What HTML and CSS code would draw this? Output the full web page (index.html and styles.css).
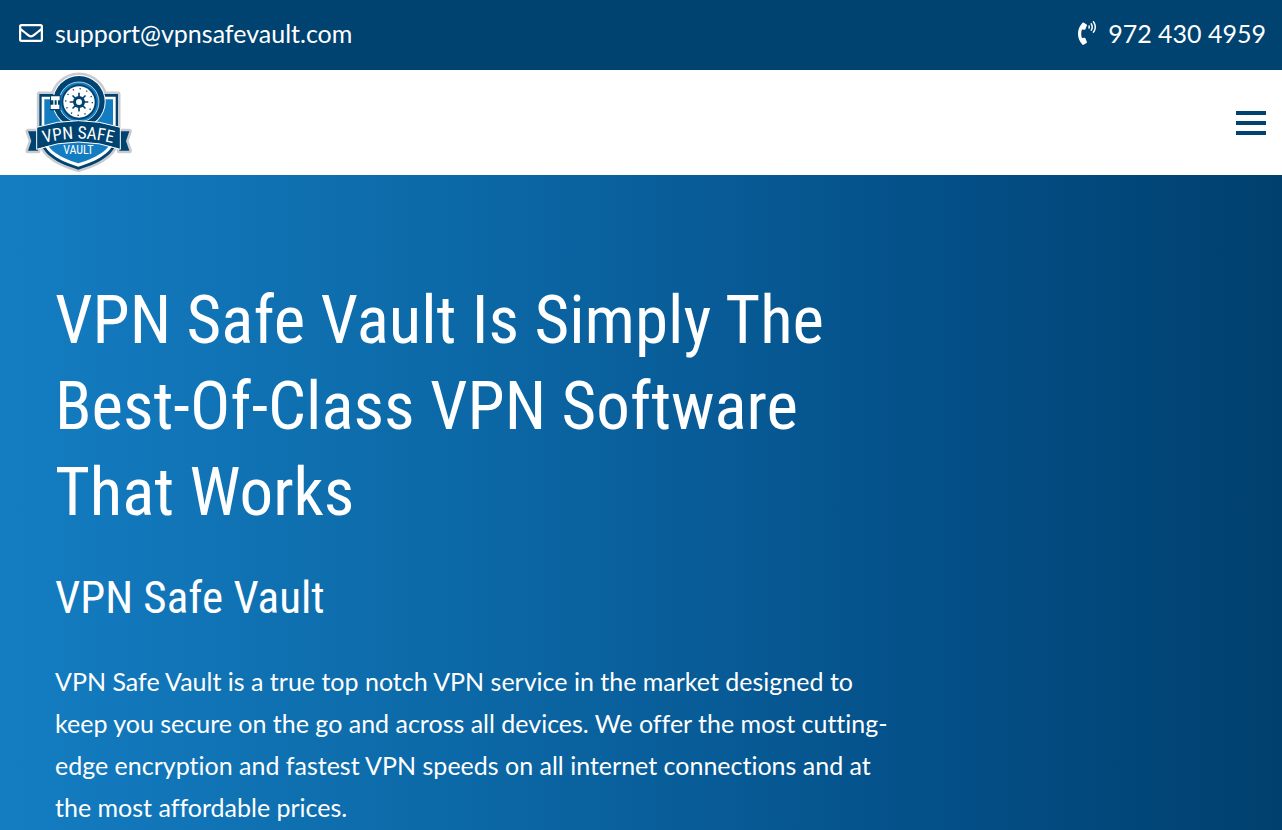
FILE: index.html
```html
<!DOCTYPE html>
<html lang="en">
<head>
<meta charset="utf-8">
<meta name="viewport" content="width=device-width, initial-scale=1">
<title>VPN Safe Vault</title>
<link rel="stylesheet" href="styles.css">
</head>
<body>
<div class="topbar">
  <a class="contact" href="mailto:support@vpnsafevault.com">
    <svg class="icon-mail" viewBox="0 0 512 512" aria-hidden="true"><path d="M464 64H48C21.500 64 0 85.500 0 112v288c0 26.500 21.500 48 48 48h416c26.500 0 48-21.500 48-48V112c0-26.500-21.500-48-48-48zm0 48v40.800c-22.400 18.300-58.200 46.700-134.600 106.500-16.800 13.200-50.200 45.100-73.400 44.700-23.200.4-56.600-31.500-73.400-44.700C106.200 199.500 70.400 171.100 48 152.800V112h416zM48 400V214.400c22.900 18.300 55.400 43.900 104.900 82.600 21.900 17.200 60.100 55.200 103.100 55 42.700.2 80.500-37.200 103.100-54.900 49.500-38.800 82-64.400 104.900-82.700V400H48z"/></svg>
    <span>support@vpnsafevault.com</span>
  </a>
  <a class="contact" href="tel:9724304959">
    <svg class="icon-phone" viewBox="0 0 384 512" aria-hidden="true"><path d="M97.300 506.900c-129.900-129.900-129.700-340.300 0-469.900 5.700-5.700 14.500-6.600 21.300-2.400l64.800 40.500a17.200 17.200 0 0 1 6.800 21l-32.400 81a17.200 17.200 0 0 1-17.700 10.700l-55.800-5.600c-21.100 58.300-20.600 122.500 0 179.500l55.800-5.600a17.200 17.200 0 0 1 17.700 10.700l32.400 81a17.200 17.200 0 0 1-6.800 21l-64.800 40.500a17.200 17.200 0 0 1-21.300-2.400zM247.100 95.500c11.800 20 11.800 45 0 65.100-4 6.700-13.100 8-18.700 2.600l-6-5.700c-3.900-3.700-4.800-9.600-2.300-14.400a32.100 32.100 0 0 0 0-29.900c-2.500-4.800-1.700-10.700 2.300-14.400l6-5.700c5.600-5.400 14.800-4.100 18.700 2.400zm91.800-91.200c60.100 71.600 60.100 175.900 0 247.400-4.500 5.300-12.500 5.700-17.600.9l-5.800-5.600c-4.600-4.400-5-11.500-.9-16.400 49.700-59.500 49.600-145.900 0-205.400-4-4.900-3.700-12 .9-16.400l5.800-5.600c5-4.800 13.100-4.400 17.600 1.100zm-46 44.900c36.100 46.300 36.100 111.100 0 157.500-4.400 5.600-12.700 6.300-17.900 1.300l-5.800-5.600c-4.400-4.200-5-11.100-1.300-15.900 26.500-34.600 26.500-82.600 0-117.100-3.700-4.800-3.100-11.700 1.300-15.900l5.800-5.600c5.200-4.900 13.500-4.200 17.900 1.300z"/></svg>
    <span>972 430 4959</span>
  </a>
</div>
<header class="header">
  <a class="brand" href="#" aria-label="VPN Safe Vault home">
    <svg class="logo" viewBox="45 12 321 315" aria-hidden="true">
      <defs>
        <path id="arch" d="M84 236Q205 200 326 236"/>
      </defs>
      <g class="logo-halo">
        <path d="M88 84H324V208C322 256 284 288 205 311C126 288 90 256 88 208Z"/>
        <circle cx="207" cy="107" r="80"/>
        <path d="M54 196H84V254H54L64 225ZM358 196H328V254H358L348 225Z"/>
      </g>
      <path class="navy" d="M88 84H324V208C322 256 284 288 205 311C126 288 90 256 88 208Z"/>
      <path class="white" d="M95 92H317V207C315 250 278 280 205 302C132 280 97 250 95 207Z"/>
      <path class="blue" d="M103 100H309V206C307 244 272 271 205 292C138 271 105 244 103 206Z"/>
      <circle class="white" cx="207" cy="107" r="80"/>
      <circle class="navy" cx="207" cy="107" r="77"/>
      <circle class="ring-blue" cx="207" cy="108" r="60"/>
      <circle class="ring-navy" cx="207" cy="108" r="53"/>
      <circle class="white" cx="207" cy="108" r="47"/>
      <circle class="dots" cx="207" cy="108" r="40"/>
      <path class="spokes" d="M207 82V134M181 108H233M189 90L225 126M189 126L225 90"/>
      <circle class="navy" cx="207" cy="108" r="18"/>
      <circle class="white" cx="207" cy="108" r="9"/>
      <path class="navy" d="M120 87H152V133H120Z"/>
      <path class="white" d="M123 91H149V103H123ZM122 116H148V129H122ZM130 103H134V116H130ZM140 103H144V116H140Z"/>
      <path class="navy" d="M54 196H84V254H54L64 225ZM358 196H328V254H358L348 225Z"/>
      <path class="ribbon" d="M80 184Q205 144 331 184V250Q205 206 80 250Z"/>
      <text class="logo-name"><textPath href="#arch" startOffset="50%">VPN SAFE</textPath></text>
      <text class="logo-sub" x="205" y="263">VAULT</text>
    </svg>
  </a>
  <button class="menu" type="button" aria-label="Open menu"><span></span><span></span><span></span></button>
</header>
<main class="hero">
  <h1>VPN Safe Vault Is Simply The<br>Best-Of-Class VPN Software<br>That Works</h1>
  <h2>VPN Safe Vault</h2>
  <p>VPN Safe Vault is a true top notch VPN service in the market designed to<br>keep you secure on the go and across all devices. We offer the most cutting-<br>edge encryption and fastest VPN speeds on all internet connections and at<br>the most affordable prices.</p>
</main>
</body>
</html>
```

FILE: styles.css
```css
* { box-sizing: border-box; }
body {
  margin: 0;
  font-family: Lato, "Open Sans", sans-serif;
  font-size: 25px;
  font-variant-ligatures: none;
  color: #fff;
}
.topbar {
  display: flex;
  justify-content: space-between;
  align-items: center;
  min-height: 70px;
  padding: 0 16px 4px 19px;
  background: #004270;
}
.contact {
  display: flex;
  align-items: center;
  gap: 12px;
  color: #fff;
  text-decoration: none;
}
.contact svg { height: 24px; fill: #fff; }
.icon-mail { width: 24px; }
.icon-phone { width: 18px; }
.header {
  display: flex;
  justify-content: space-between;
  align-items: center;
  padding: 0 16px 0 25px;
  background: #fff;
}
.brand, .logo { display: block; }
.logo { width: 107px; height: 105px; }
.menu {
  display: flex;
  flex-direction: column;
  gap: 6px;
  padding: 0;
  border: 0;
  background: none;
}
.menu span { width: 30px; height: 4px; background: #004270; }
.hero {
  min-height: calc(100vh - 175px);
  padding: 102px 55px 0;
  background: linear-gradient(90deg, #147dc2, #0b66a3 40%, #045089 72%, #00406e);
  overflow: hidden;
}
h1, h2 {
  margin: 0;
  font-family: "Roboto Condensed", "Liberation Sans Narrow", sans-serif;
  font-weight: 400;
}
h1 { font-size: 67px; line-height: 86px; }
h2 { margin-top: 34px; font-size: 45px; line-height: 58px; }
p { margin: 33px 0 0; line-height: 42px; }
.navy { fill: #004270; }
.blue { fill: #147dc2; }
.white { fill: #fff; }
.ring-blue { fill: #147dc2; stroke: #fff; stroke-width: 2px; }
.ring-navy { fill: #004270; }
.dots { fill: none; stroke: #004270; stroke-width: 4px; stroke-dasharray: 4 17; }
.spokes { fill: none; stroke: #004270; stroke-width: 5px; stroke-linecap: round; }
.ribbon { fill: #004270; stroke: #fff; stroke-width: 3px; }
.logo-halo { fill: #c9cbd0; stroke: #c9cbd0; stroke-width: 15px; stroke-linejoin: round; }
.logo-name, .logo-sub {
  font-family: "Roboto Condensed", "Liberation Sans Narrow", sans-serif;
  fill: #fff;
  text-anchor: middle;
}
.logo-name { font-size: 52px; font-weight: 400; }
.logo-sub { font-size: 36px; }
```
